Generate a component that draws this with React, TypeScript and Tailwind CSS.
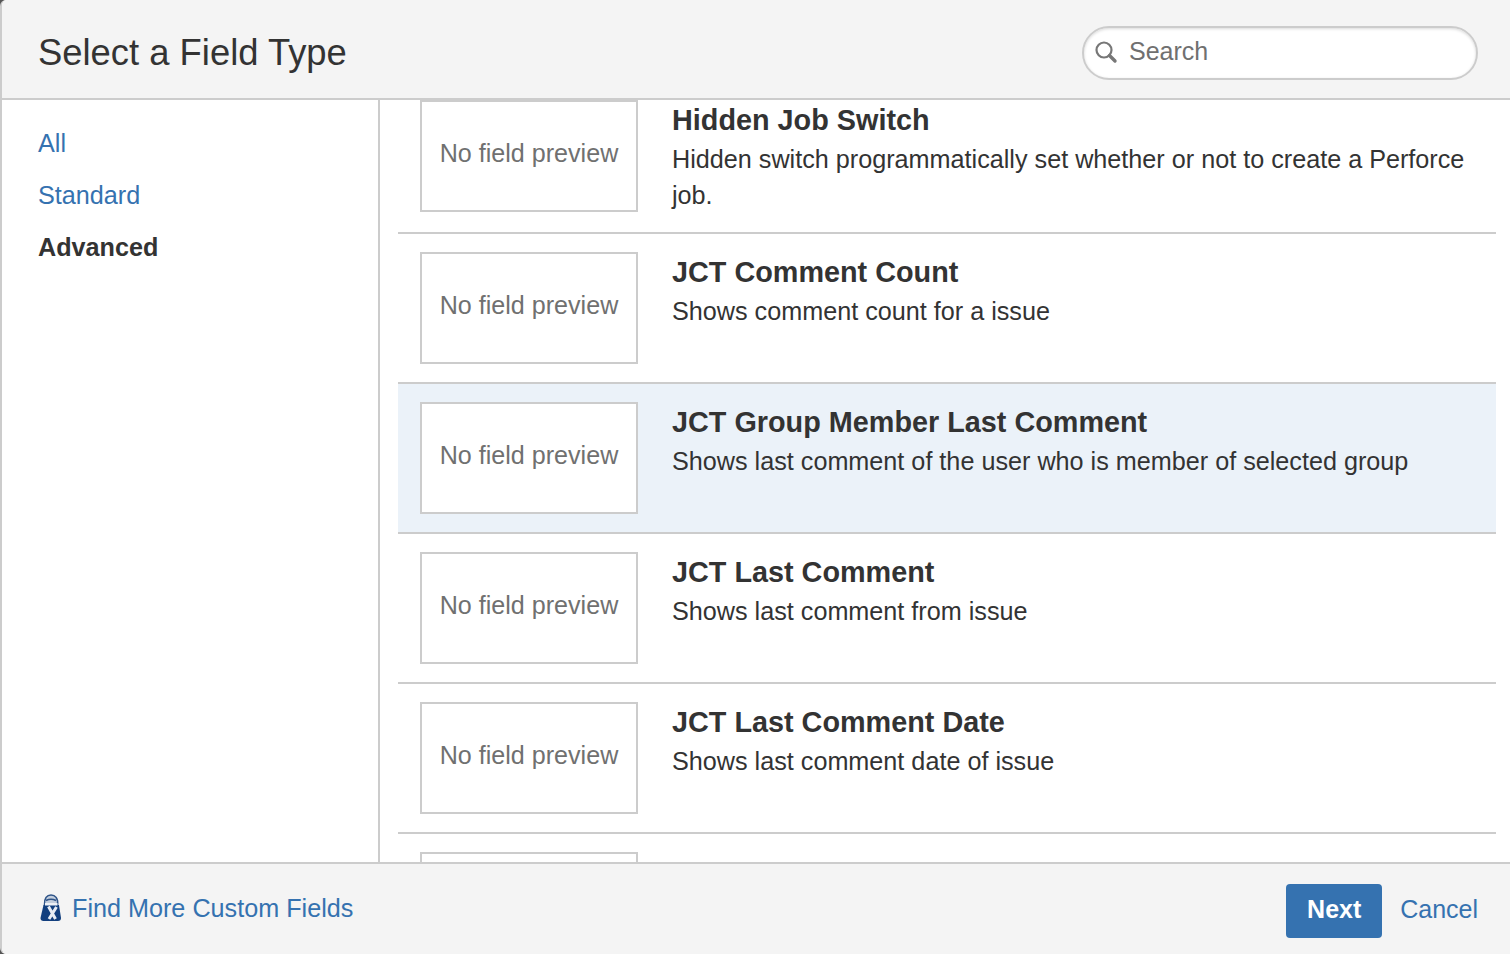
const FIELDS = [
  {
    title: "Hidden Job Switch",
    text: "Hidden switch programmatically set whether or not to create a Perforce job.",
  },
  { title: "JCT Comment Count", text: "Shows comment count for a issue" },
  {
    title: "JCT Group Member Last Comment",
    text: "Shows last comment of the user who is member of selected group",
    selected: true,
  },
  { title: "JCT Last Comment", text: "Shows last comment from issue" },
  { title: "JCT Last Comment Date", text: "Shows last comment date of issue" },
  { title: "JCT Last Commenter", text: "" },
];

function SearchIcon() {
  return (
    <svg width="24" height="24" viewBox="0 0 24 24" fill="none" className="shrink-0">
      <circle cx="10" cy="10" r="7.5" stroke="#777" strokeWidth="2.2" />
      <path d="M15.500 15.500l5.500 5.500" stroke="#777" strokeWidth="3.4" strokeLinecap="round" />
    </svg>
  );
}

// atlassian marketplace bag
function BagIcon() {
  return (
    <svg width="22" height="28" viewBox="0 0 22 28" className="shrink-0">
      <path d="M4.500 11C4 4 7 1 11 1s7.500 3 6.500 10z" fill="#c3cedd" stroke="#2f5488" strokeWidth="1.600" />
      <path d="M6 6.500c3-1.500 7-1.500 10 0" fill="none" stroke="#2f5488" strokeWidth="1.600" />
      <path d="M3.500 11h15.500L21 24c0 2-1 3-3 3H3.500C1.500 27 .5 26 .5 24z" fill="#123f7e" />
      <path d="M5 9h12.500v2.500H5z" fill="#eef1f5" />
      <path d="M8.500 12.500l7 12.500M16.500 13L9 25" stroke="#e8edf4" strokeWidth="3" />
    </svg>
  );
}

function FieldRow({ title, text, selected }: { title: string; text: string; selected?: boolean }) {
  return (
    <div className={`flex h-[150px] shrink-0 border-b-2 border-[#ccc] pl-[22px] pt-[18px] first:h-[152px] ${selected ? "bg-[#ebf2f9]" : ""}`}>
      <div className="flex h-[112px] w-[218px] shrink-0 justify-center border-2 border-[#ccc] bg-white pt-[31px] text-[25.1px] leading-[40px] text-[#707070]">
        No field preview
      </div>
      <div className="ml-[34px] min-w-0 pr-[10px]">
        <h2 className="text-[28.8px] font-bold leading-[40px] text-[#333]">{title}</h2>
        <p className="mt-px text-[25.2px] leading-[36px] text-[#333]">{text}</p>
      </div>
    </div>
  );
}

export default function App() {
  return (
    <div className="h-[954px] w-[1510px] bg-[#555]">
      <div className="flex h-full w-full flex-col overflow-hidden rounded-l-[6px] border-l-2 border-[#ccc] bg-white font-['Liberation_Sans',Arial,sans-serif]">
        <header className="flex h-[100px] shrink-0 items-center justify-between border-b-2 border-[#ccc] bg-[#f4f4f4] pl-[36px] pr-[32px] pt-[8px]">
          <h1 className="text-[36.4px] font-normal leading-[44px] text-[#333]">Select a Field Type</h1>
          <div className="flex h-[54px] w-[396px] items-center gap-[11px] rounded-[27px] border-2 border-[#ccc] bg-white pb-[2px] pl-[10px] shadow-[inset_0_1px_3px_rgba(0,0,0,0.15)]">
            <SearchIcon />
            <span className="text-[25px] text-[#707070]">Search</span>
          </div>
        </header>

        <div className="flex min-h-0 flex-1">
          <nav className="flex w-[378px] shrink-0 flex-col gap-[12px] border-r-2 border-[#ccc] pl-[36px] pt-[23px] text-[25.2px] leading-[40px]">
            <a className="text-[#3572b0]">All</a>
            <a className="text-[#3572b0]">Standard</a>
            <a className="font-bold text-[#333]">Advanced</a>
          </nav>
          <div className="flex min-w-0 flex-1 flex-col overflow-hidden pl-[18px] pr-[14px]">
            <div className="mt-[-18px] flex flex-col">
              {FIELDS.map((field) => (
                <FieldRow key={field.title} {...field} />
              ))}
            </div>
          </div>
        </div>

        <footer className="flex h-[92px] shrink-0 items-start justify-between border-t-2 border-[#ccc] bg-[#f4f4f4] pl-[38px] pr-[32px] pt-[20px]">
          <a className="mt-[4px] flex items-center gap-[10px] text-[25.2px] leading-[40px] text-[#3572b0]">
            <BagIcon />
            Find More Custom Fields
          </a>
          <div className="flex items-start gap-[18px]">
            <button className="h-[54px] w-[96px] rounded-[4px] bg-[#3572b0] pb-[2px] text-[25px] font-bold text-white">Next</button>
            <a className="mt-[5px] text-[25px] leading-[40px] text-[#3572b0]">Cancel</a>
          </div>
        </footer>
      </div>
    </div>
  );
}
